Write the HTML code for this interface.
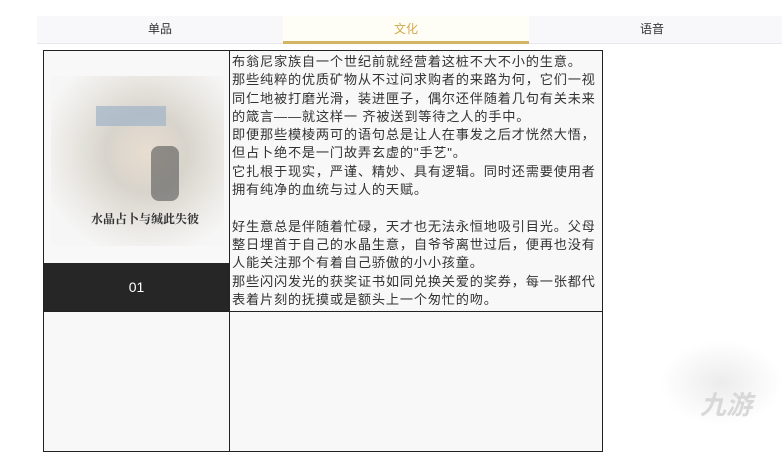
<!DOCTYPE html>
<html><head><meta charset="utf-8"><style>
body{margin:0;width:783px;height:426px;background:#fff;overflow:hidden;position:relative;font-family:"Liberation Sans","Noto Sans CJK SC",sans-serif;}
.tabs{position:absolute;left:37px;top:16px;width:745px;height:27px;background:#f8f8fa;border-bottom:1px solid #e6e6ee;display:flex;}
.tab{width:246px;text-align:center;font-size:12px;line-height:26px;color:#333;position:relative}
.tab.on{color:#d4a84a;background:#fffef6}
.tab.on:after{content:"";position:absolute;left:0;right:0;bottom:-1px;height:3px;background:#d3b461}
.tbl{position:absolute;left:43px;top:50px;width:558px;height:400px;border:1px solid #222;background:#f8f8f8}
.vl{position:absolute;left:185px;top:0;bottom:0;width:1px;background:#222}
.hl{position:absolute;left:0;right:0;top:260px;height:1px;background:#222}
.dark{position:absolute;left:0;top:212px;width:185px;height:48px;background:#262626;color:#fff;font-size:14px;text-align:center;line-height:48px}
.txt{position:absolute;left:188px;top:2px;width:368px;font-size:13.2px;line-height:18.3px;color:#333;letter-spacing:0.8px}
.img{position:absolute;left:7px;top:25px;width:173px;height:170px;background:radial-gradient(ellipse at 55% 45%,#e8ddd0 0%,#d8d4cc 30%,#eceae6 60%,#f6f6f6 80%)}
.img .t{position:absolute;left:40px;top:134px;font-family:"Noto Serif CJK SC",serif;font-size:12px;color:#333;white-space:nowrap;font-weight:bold}
</style></head><body>
<div class="tabs"><div class="tab">单品</div><div class="tab on">文化</div><div class="tab">语音</div></div>
<div class="tbl">
<div class="img"><div style="position:absolute;left:45px;top:30px;width:70px;height:20px;background:#9fb3c8;opacity:.7"></div><div style="position:absolute;left:100px;top:70px;width:28px;height:55px;background:#555;opacity:.6;border-radius:8px"></div><div class="t">水晶占卜与缄此失彼</div></div>
<div class="dark">01</div>
<div class="vl"></div><div class="hl"></div>
<div class="txt">布翁尼家族自一个世纪前就经营着这桩不大不小的生意。<br>那些纯粹的优质矿物从不过问求购者的来路为何，它们一视同仁地被打磨光滑，装进匣子，偶尔还伴随着几句有关未来的箴言——就这样一 齐被送到等待之人的手中。<br>即便那些模棱两可的语句总是让人在事发之后才恍然大悟，但占卜绝不是一门故弄玄虚的"手艺"。<br>它扎根于现实，严谨、精妙、具有逻辑。同时还需要使用者拥有纯净的血统与过人的天赋。<br><br>好生意总是伴随着忙碌，天才也无法永恒地吸引目光。父母整日埋首于自己的水晶生意，自爷爷离世过后，便再也没有人能关注那个有着自己骄傲的小小孩童。<br>那些闪闪发光的获奖证书如同兑换关爱的奖券，每一张都代表着片刻的抚摸或是额头上一个匆忙的吻。</div>
</div>
<div style="position:absolute;left:660px;top:340px;width:123px;height:86px;background:radial-gradient(ellipse,#ececec,#fff 70%)"></div>
<div style="position:absolute;left:700px;top:385px;font-size:26px;color:#d8d8d8;font-style:italic;font-weight:bold">九游</div>
</body></html>
